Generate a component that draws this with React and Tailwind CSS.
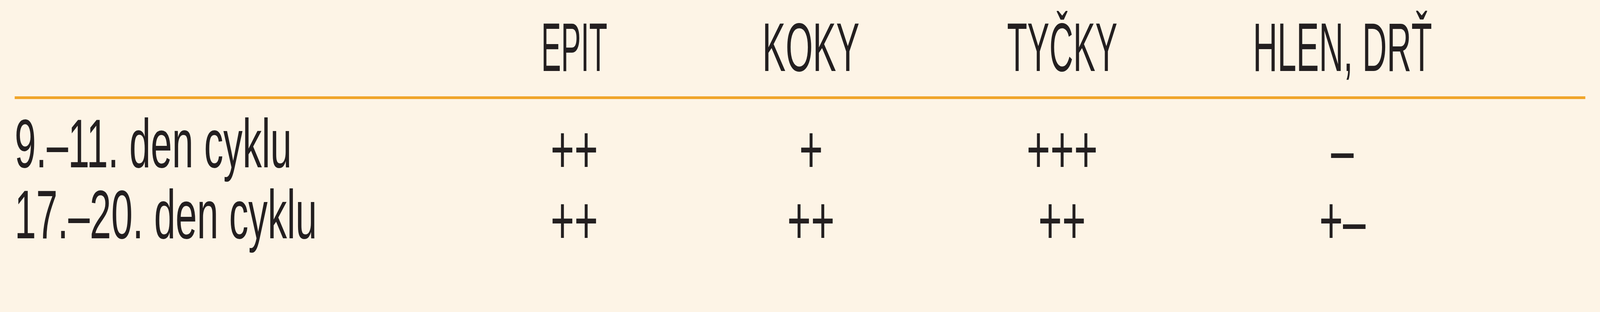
import React from "react";

const headers = ["EPIT", "KOKY", "TYČKY", "HLEN, DRŤ"];
const headerScale = ["scale-x-[0.644]", "scale-x-[0.757]", "scale-x-[0.717]", "scale-x-[0.735]"];

const rows = [
  { label: "9.–11. den cyklu", labelScale: "scale-x-[0.832]", cells: ["++", "+", "+++", "–"] },
  { label: "17.–20. den cyklu", labelScale: "scale-x-[0.835]", cells: ["++", "++", "++", "+–"] },
];

const gridCols = "grid grid-cols-[1682px_902px_902px_1012px_1124px_1fr]";
const DESIGN_W = 6098;

function useFit() {
  const get = () => (typeof window !== "undefined" && window.innerWidth ? window.innerWidth / DESIGN_W : 1);
  const [k, setK] = React.useState(get);
  React.useEffect(() => {
    const on = () => setK(get());
    window.addEventListener("resize", on);
    return () => window.removeEventListener("resize", on);
  }, []);
  return k;
}

export default function App() {
  const k = useFit();
  return (
    <div className="w-full h-[800px] bg-[#fdf4e6] overflow-hidden">
      <div
        className="w-[6098px] h-[800px] text-[#231f20] px-[56px] pt-[33px] origin-top-left"
        style={{ fontFamily: '"Liberation Sans", Arial, sans-serif', transform: `scaleX(${k})` }}
      >
        <div className={`${gridCols} text-[176px] leading-none`}>
          <div />
          {headers.map((h, i) => (
            <div key={h} className="flex justify-center whitespace-nowrap">
              <span className={`inline-block origin-center ${headerScale[i]}`}>{h}</span>
            </div>
          ))}
          <div />
        </div>
        <div className="mt-[38px] h-[7px] bg-[#f0a52a]" />
        <div className="mt-[23px]">
          {rows.map((r) => (
            <div key={r.label} className={`${gridCols} text-[176px] leading-[182px]`}>
              <div className="whitespace-nowrap">
                <span className={`inline-block origin-left ${r.labelScale}`}>{r.label}</span>
              </div>
              {r.cells.map((c, i) => (
                <div key={i} className="flex justify-center whitespace-nowrap">
                  <span className="inline-block origin-center scale-x-[0.88] translate-y-[15px]">{c}</span>
                </div>
              ))}
              <div />
            </div>
          ))}
        </div>
      </div>
    </div>
  );
}
